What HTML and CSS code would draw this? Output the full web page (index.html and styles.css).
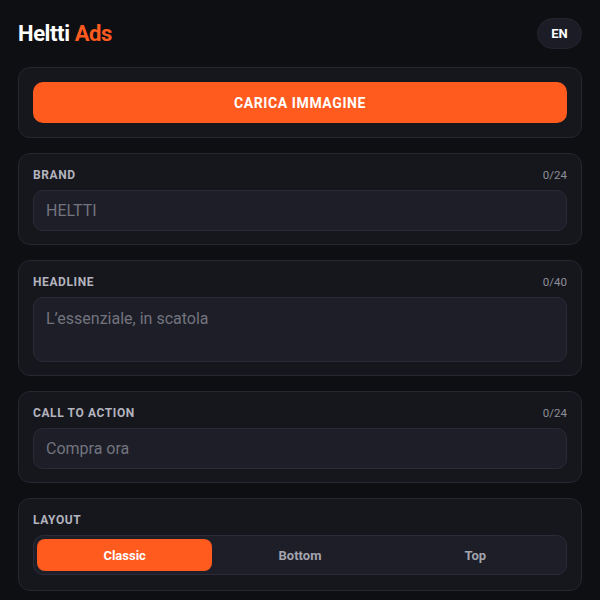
FILE: index.html
```html
<!DOCTYPE html>
<html lang="it">
<head>
<meta charset="utf-8">
<title>Heltti Ads</title>
<link rel="stylesheet" href="styles.css">
</head>
<body>
<div class="app">
  <header class="topbar">
    <div class="logo">Heltti <span class="accent">Ads</span></div>
    <button class="lang">EN</button>
  </header>

  <section class="card">
    <button class="primary">CARICA IMMAGINE</button>
  </section>

  <section class="card field">
    <div class="field-head">
      <span class="label">BRAND</span>
      <span class="count">0/24</span>
    </div>
    <input class="input" type="text" placeholder="HELTTI">
  </section>

  <section class="card field">
    <div class="field-head">
      <span class="label">HEADLINE</span>
      <span class="count">0/40</span>
    </div>
    <textarea class="input textarea" placeholder="L’essenziale, in scatola"></textarea>
  </section>

  <section class="card field">
    <div class="field-head">
      <span class="label">CALL TO ACTION</span>
      <span class="count">0/24</span>
    </div>
    <input class="input" type="text" placeholder="Compra ora">
  </section>

  <section class="card field layout-card">
    <div class="field-head">
      <span class="label">LAYOUT</span>
    </div>
    <div class="segmented">
      <button class="seg active">Classic</button>
      <button class="seg">Bottom</button>
      <button class="seg">Top</button>
    </div>
  </section>
</div>
</body>
</html>
```

FILE: styles.css
```css
* { box-sizing: border-box; }

html, body {
  margin: 0;
  padding: 0;
  background: #0e0f13;
}

body {
  font-family: Roboto, "Liberation Sans", sans-serif;
  color: #f2f2f5;
}

.app {
  padding: 18px 18px 0;
  display: flex;
  flex-direction: column;
  gap: 15px;
}

.topbar {
  display: flex;
  justify-content: space-between;
  align-items: center;
  height: 31px;
  margin-bottom: 3px;
}

.logo {
  font-size: 22px;
  font-weight: 700;
  letter-spacing: -0.4px;
  color: #ffffff;
}

.accent { color: #ff5b1f; }

.lang {
  width: 45px;
  height: 31px;
  border-radius: 16px;
  border: 1px solid #23242d;
  background: #1b1c25;
  color: #ffffff;
  font-family: inherit;
  font-size: 13px;
  font-weight: 700;
  padding: 0;
}

.card {
  background: #16171d;
  border: 1px solid #26272f;
  border-radius: 12px;
  padding: 14px;
  display: flex;
  flex-direction: column;
  gap: 8px;
}

.card.field { padding-bottom: 13px; }

.card.layout-card { padding-bottom: 15px; }

.primary {
  height: 41px;
  border: none;
  border-radius: 10px;
  background: #ff5b1f;
  color: #ffffff;
  font-family: inherit;
  font-size: 14px;
  font-weight: 700;
  letter-spacing: 0.6px;
}

.field-head {
  display: flex;
  justify-content: space-between;
  align-items: center;
  height: 14px;
}

.label {
  font-size: 12px;
  font-weight: 700;
  letter-spacing: 0.6px;
  color: #b3b4be;
}

.count {
  font-size: 11.5px;
  color: #8d8e98;
}

.input {
  display: block;
  width: 100%;
  height: 41px;
  background: #1d1e28;
  border: 1px solid #2a2b36;
  border-radius: 10px;
  padding: 0 12px;
  font-family: inherit;
  font-size: 16px;
  color: #e8e8ee;
  outline: none;
}

.input::placeholder { color: #73747e; }

.textarea {
  height: 65px;
  padding: 11px 12px;
  resize: none;
  line-height: 20px;
}

.segmented {
  display: grid;
  grid-template-columns: 1fr 1fr 1fr;
  height: 40px;
  padding: 3px;
  background: #1d1e28;
  border: 1px solid #2a2b36;
  border-radius: 10px;
}

.seg {
  border: none;
  background: transparent;
  border-radius: 8px;
  font-family: inherit;
  font-size: 13px;
  font-weight: 700;
  color: #a3a4ae;
  padding: 0;
}

.seg.active {
  background: #ff5b1f;
  color: #ffffff;
}
```
